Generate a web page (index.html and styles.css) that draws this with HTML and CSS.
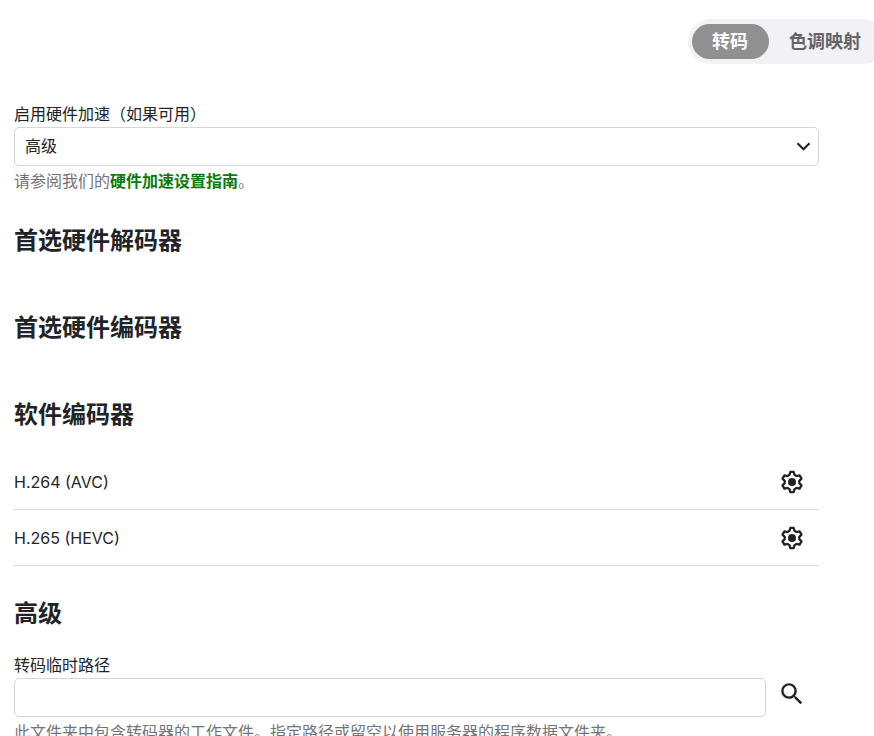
FILE: index.html
```html
<!DOCTYPE html>
<html lang="zh-CN">
<head>
    <meta charset="UTF-8">
    <meta name="viewport" content="width=device-width, initial-scale=1.0">
    <title>转码</title>
    <link rel="stylesheet" href="styles.css">
</head>
<body>
    <div class="page">
        <nav class="tabs">
            <button type="button" class="tab tab-active">转码</button>
            <button type="button" class="tab">色调映射</button>
        </nav>

        <form class="settings">
            <div class="field">
                <label for="hwAccel">启用硬件加速（如果可用）</label>
                <div class="select-box">
                    <select id="hwAccel" class="control">
                        <option>高级</option>
                    </select>
                    <svg class="arrow" viewBox="0 0 24 24"><path d="M6.5 8.3l6 6 6-6"/></svg>
                </div>
                <div class="description">请参阅我们的<a href="#">硬件加速设置指南</a>。</div>
            </div>

            <section class="section">
                <h2>首选硬件解码器</h2>
            </section>

            <section class="section">
                <h2>首选硬件编码器</h2>
            </section>

            <section class="section">
                <h2>软件编码器</h2>
                <ul class="codecs">
                    <li class="codec">
                        <span>H.264 (AVC)</span>
                        <button type="button" class="icon-button" aria-label="设置">
                            <svg class="gear" viewBox="0 0 24 24">
                                <path d="M13.6 1.9L14.6 5 16.7 6.1 19.6 5.4 21.5 8.6 19.3 10.9V13.1L21.5 15.4 19.6 18.6 16.7 17.9 14.6 19 13.6 22.1H10.4L9.4 19 7.3 17.9 4.4 18.6 2.5 15.4 4.7 13.1V10.9L2.5 8.6 4.4 5.4 7.3 6.1 9.4 5 10.4 1.9z"/>
                                <circle cx="12" cy="12" r="4"/>
                            </svg>
                        </button>
                    </li>
                    <li class="codec">
                        <span>H.265 (HEVC)</span>
                        <button type="button" class="icon-button" aria-label="设置">
                            <svg class="gear" viewBox="0 0 24 24">
                                <path d="M13.6 1.9L14.6 5 16.7 6.1 19.6 5.4 21.5 8.6 19.3 10.9V13.1L21.5 15.4 19.6 18.6 16.7 17.9 14.6 19 13.6 22.1H10.4L9.4 19 7.3 17.9 4.4 18.6 2.5 15.4 4.7 13.1V10.9L2.5 8.6 4.4 5.4 7.3 6.1 9.4 5 10.4 1.9z"/>
                                <circle cx="12" cy="12" r="4"/>
                            </svg>
                        </button>
                    </li>
                </ul>
            </section>

            <section class="section">
                <h2>高级</h2>
                <div class="field">
                    <label for="tempPath">转码临时路径</label>
                    <div class="path-row">
                        <input type="text" id="tempPath" class="control">
                        <button type="button" class="icon-button browse" aria-label="浏览">
                            <svg class="search" viewBox="2 2 20 20">
                                <path d="M15.5 14h-.79l-.28-.27A6.471 6.471 0 0 0 16 9.5 6.5 6.5 0 1 0 9.5 16c1.61 0 3.09-.59 4.23-1.57l.27.28v.79l5 4.99L20.49 19l-4.99-5zm-6 0C7.01 14 5 11.99 5 9.5S7.01 5 9.5 5 14 7.01 14 9.5 11.99 14 9.5 14z"/>
                            </svg>
                        </button>
                    </div>
                    <div class="description">此文件夹中包含转码器的工作文件。指定路径或留空以使用服务器的程序数据文件夹。</div>
                </div>
            </section>
        </form>
    </div>
</body>
</html>
```
FILE: styles.css
```css
* {
    box-sizing: border-box;
}

body {
    margin: 0;
    background-color: #fff;
    color: #222326;
    font-family: Inter, "Noto Sans CJK SC", sans-serif;
    font-size: 16px;
    line-height: 24px;
}

button, input, select {
    font: inherit;
    color: inherit;
}

.page {
    height: 100vh;
    overflow: hidden auto;
    scrollbar-width: none;
}

/* the tab strip runs past the right edge */
.tabs {
    display: flex;
    width: max-content;
    margin: 19px -12px 38px auto;
    padding: 5px 4px;
    border-radius: 23px;
    background-color: #f2f1f6;
}

.tab {
    height: 35px;
    padding: 0 21px 0 20px;
    border: none;
    border-radius: 18px;
    background: none;
    color: #646466;
    font-size: 18px;
    font-weight: bold;
    cursor: pointer;
}

.tab-active {
    background-color: #909091;
    color: #fff;
}

.settings {
    padding: 0 55px 40px 14px;
}

.field label {
    display: block;
    margin-bottom: 1px;
}

.control {
    display: block;
    width: 100%;
    height: 39px;
    padding: 0 10px 2px;
    border: 1px solid #d6d6d6;
    border-radius: 5px;
    background-color: #fff;
    appearance: none;
}

.select-box {
    position: relative;
}

.arrow {
    position: absolute;
    top: 8px;
    right: 4px;
    width: 24px;
    height: 24px;
    fill: none;
    stroke: #222326;
    stroke-width: 2.2;
    pointer-events: none;
}

.description {
    margin-top: 3px;
    color: #747476;
}

.description a {
    color: #0b7a0b;
    font-weight: bold;
    text-decoration: none;
}

.section {
    display: flow-root;
    margin-top: 30px;
}

h2 {
    margin: 0 0 21px;
    font-size: 24px;
    line-height: 36px;
    font-weight: bold;
}

.codecs {
    margin: 0;
    padding: 0;
    list-style: none;
}

.codec {
    display: flex;
    align-items: center;
    justify-content: space-between;
    height: 56px;
    padding-right: 7px;
    border-bottom: 1px solid #d6d6d6;
}

.icon-button {
    display: flex;
    padding: 8px;
    border: none;
    background: none;
    cursor: pointer;
}

.icon-button svg {
    width: 24px;
    height: 24px;
}

.gear path {
    fill: none;
    stroke: #222326;
    stroke-width: 2.3;
    stroke-linejoin: round;
}

.gear circle, .search {
    fill: #222326;
}

.path-row {
    display: flex;
    align-items: flex-start;
    gap: 6px;
    height: 39px;
    padding-right: 7px;
}

.browse {
    padding-top: 4px;
}
```
